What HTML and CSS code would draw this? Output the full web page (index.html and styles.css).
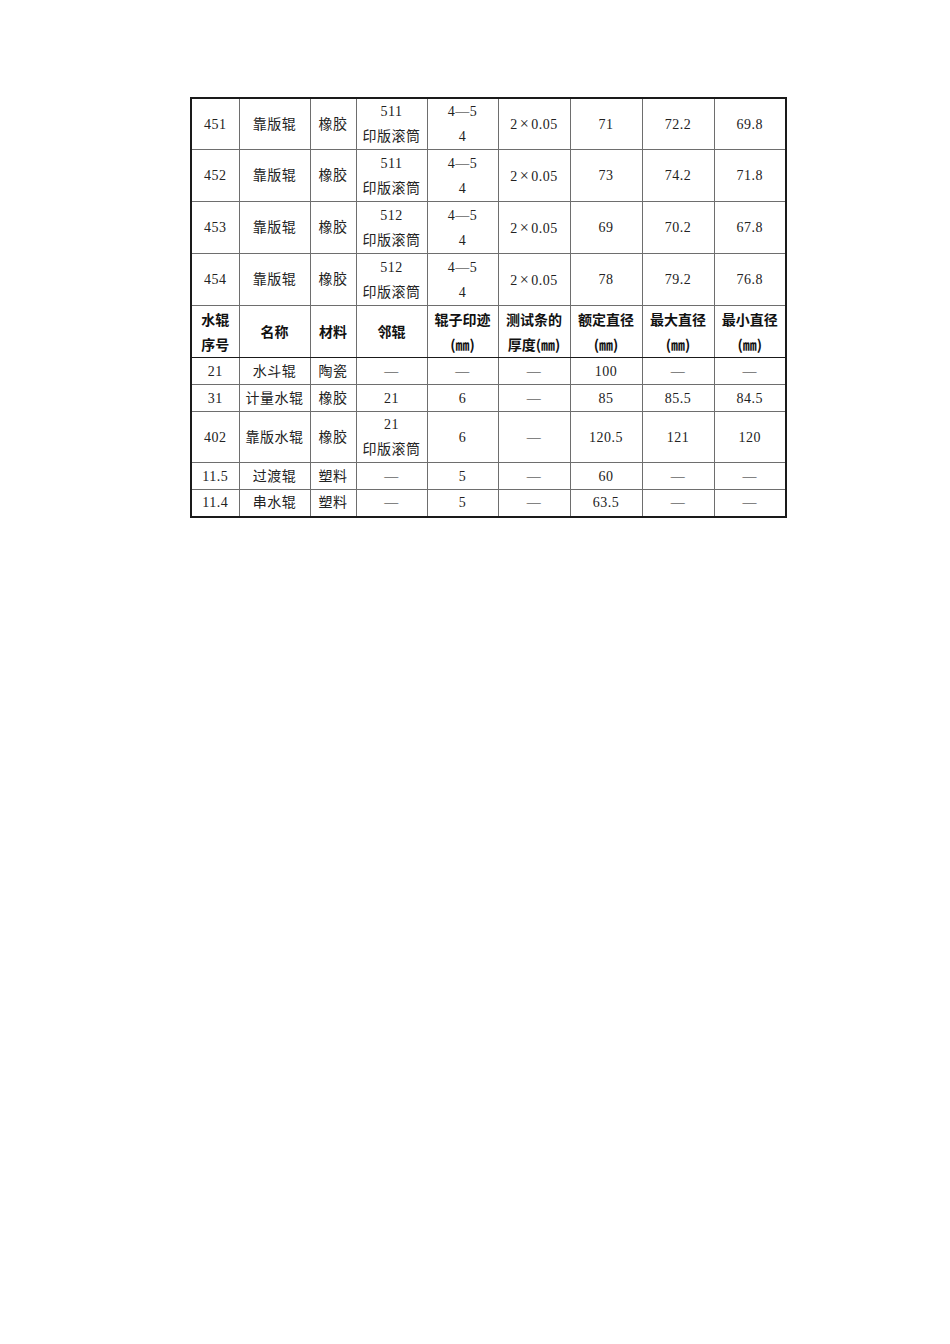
FILE: index.html
```html
<!DOCTYPE html>
<html lang="zh-CN">
<head>
<meta charset="utf-8">
<title>水辊参数表</title>
<link rel="stylesheet" href="styles.css">
</head>
<body>
<div class="page">
<table class="spec">
<colgroup>
<col class="c1"><col class="c2"><col class="c3"><col class="c4"><col class="c5">
<col class="c6"><col class="c7"><col class="c8"><col class="c9">
</colgroup>
<tbody>
<tr class="first">
<td>451</td><td>靠版辊</td><td>橡胶</td><td>511<br>印版滚筒</td><td>4—5<br>4</td><td>2<span class="x">×</span>0.05</td><td>71</td><td>72.2</td><td>69.8</td>
</tr>
<tr class="tall">
<td>452</td><td>靠版辊</td><td>橡胶</td><td>511<br>印版滚筒</td><td>4—5<br>4</td><td>2<span class="x">×</span>0.05</td><td>73</td><td>74.2</td><td>71.8</td>
</tr>
<tr class="tall">
<td>453</td><td>靠版辊</td><td>橡胶</td><td>512<br>印版滚筒</td><td>4—5<br>4</td><td>2<span class="x">×</span>0.05</td><td>69</td><td>70.2</td><td>67.8</td>
</tr>
<tr class="tall">
<td>454</td><td>靠版辊</td><td>橡胶</td><td>512<br>印版滚筒</td><td>4—5<br>4</td><td>2<span class="x">×</span>0.05</td><td>78</td><td>79.2</td><td>76.8</td>
</tr>
<tr class="tall head">
<th>水辊<br>序号</th><th>名称</th><th>材料</th><th>邻辊</th><th>辊子印迹<br>(㎜)</th><th>测试条的<br>厚度(㎜)</th><th>额定直径<br>(㎜)</th><th>最大直径<br>(㎜)</th><th>最小直径<br>(㎜)</th>
</tr>
<tr class="short">
<td>21</td><td>水斗辊</td><td>陶瓷</td><td>—</td><td>—</td><td>—</td><td>100</td><td>—</td><td>—</td>
</tr>
<tr class="short">
<td>31</td><td>计量水辊</td><td>橡胶</td><td>21</td><td>6</td><td>—</td><td>85</td><td>85.5</td><td>84.5</td>
</tr>
<tr class="mid">
<td>402</td><td>靠版水辊</td><td>橡胶</td><td>21<br>印版滚筒</td><td>6</td><td>—</td><td>120.5</td><td>121</td><td>120</td>
</tr>
<tr class="short">
<td>11.5</td><td>过渡辊</td><td>塑料</td><td>—</td><td>5</td><td>—</td><td>60</td><td>—</td><td>—</td>
</tr>
<tr class="short">
<td>11.4</td><td>串水辊</td><td>塑料</td><td>—</td><td>5</td><td>—</td><td>63.5</td><td>—</td><td>—</td>
</tr>
</tbody>
</table>
</div>
</body>
</html>
```

FILE: styles.css
```css
html, body {
  margin: 0;
  padding: 0;
  background: #ffffff;
}

.page {
  padding: 97px 0 0 190px;
}

.spec {
  border-collapse: collapse;
  table-layout: fixed;
  width: 595px;
  border: 2px solid #1a1a1a;
  font-family: "Liberation Serif", "Noto Sans CJK SC", serif;
  font-size: 14px;
  color: #222222;
}

.c1 { width: 48px; }
.c2 { width: 71px; }
.c3 { width: 46px; }
.c4 { width: 71px; }
.c5 { width: 71px; }
.c6 { width: 72px; }
.c7 { width: 72px; }
.c8 { width: 72px; }
.c9 { width: 72px; }

.spec td,
.spec th {
  border: 1px solid #6e6e6e;
  padding: 0;
  text-align: center;
  vertical-align: middle;
  line-height: 25px;
  letter-spacing: 0.5px;
}

.spec .x {
  padding: 0 2px;
  font-size: 16px;
}

.spec th {
  font-family: "Noto Sans CJK SC", sans-serif;
  font-weight: 700;
  color: #111111;
  letter-spacing: 0;
}

.spec tr.head th {
  border-top-color: #1a1a1a;
  border-bottom-color: #1a1a1a;
}

.first { height: 51px; }
.tall { height: 52px; }
.mid { height: 50px; }
.short { height: 27px; }
```
